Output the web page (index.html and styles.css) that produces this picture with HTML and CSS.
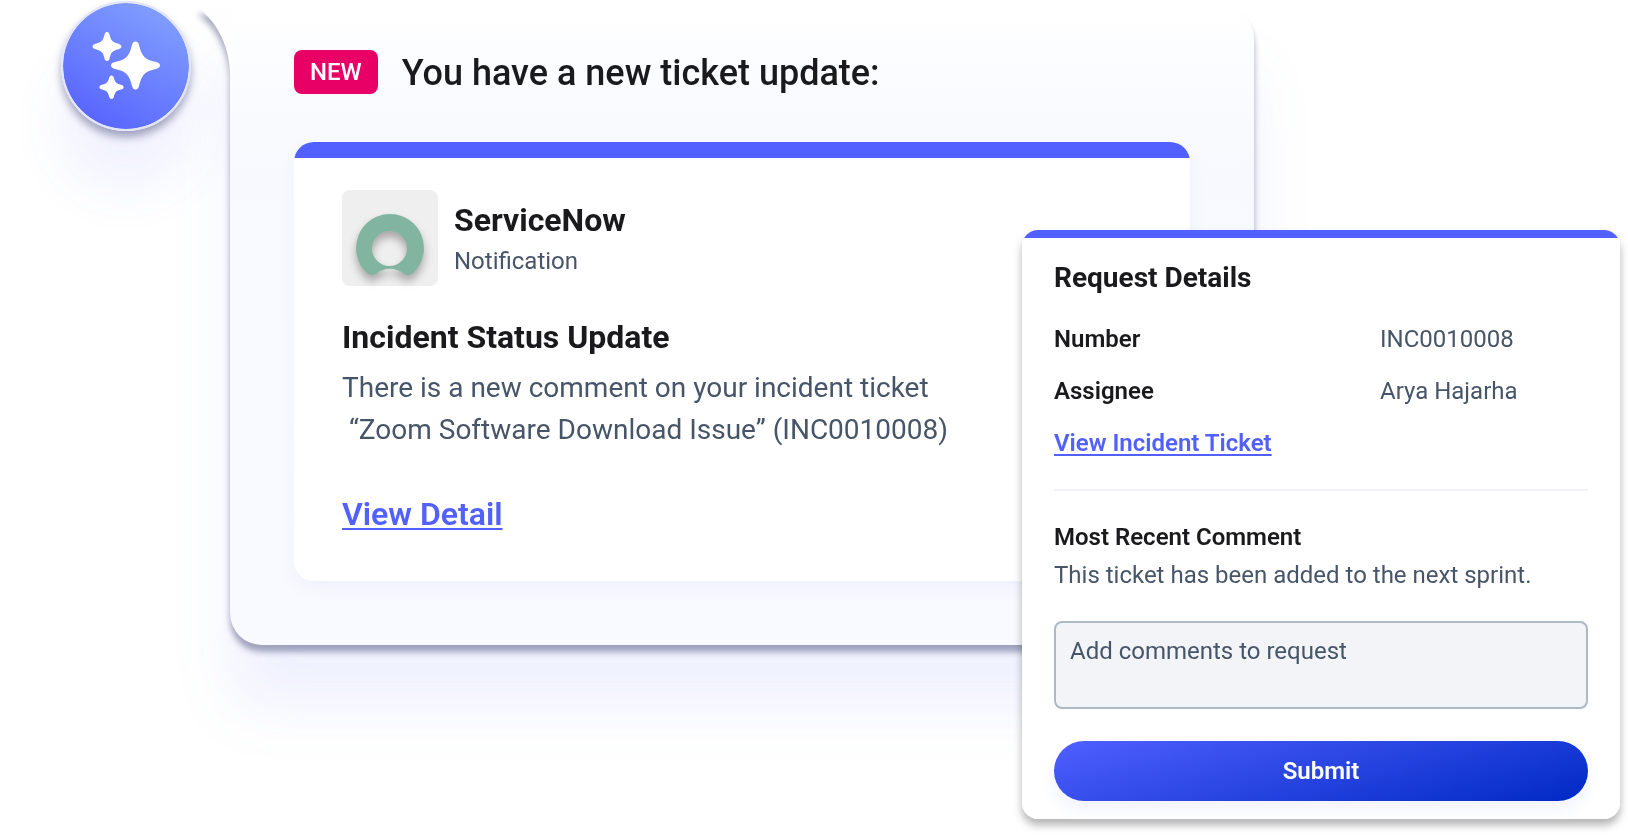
FILE: index.html
```html
<!DOCTYPE html>
<html lang="en">
<head>
  <meta charset="UTF-8">
  <meta name="viewport" content="width=device-width, initial-scale=1">
  <title>Ticket update</title>
  <link rel="stylesheet" href="styles.css">
</head>
<body>
  <main class="stage">
    <div class="avatar">
      <svg viewBox="0 0 126 126" aria-hidden="true">
        <path d="M72.500 38.500c2.200 0 3 1.700 3.500 3.600 2.700 11 5.500 14.700 17 17 2 .4 4 1.400 4 3.400s-2 3-4 3.400c-11.500 2.300-14.300 6-17 17-.5 1.900-1.300 3.600-3.500 3.600s-3-1.700-3.500-3.600c-2.700-11-5.500-14.700-17-17-2-.4-4-1.400-4-3.400s2-3 4-3.400c11.500-2.300 14.300-6 17-17 .5-1.900 1.300-3.600 3.500-3.600z"/>
        <path d="M44 29c1.500 0 2.200 1.200 2.500 2.500 1.300 6 3 7.800 9 9.300 1.500.4 3 1.200 3 2.700s-1.500 2.300-3 2.700c-6 1.500-7.700 3.300-9 9.300-.3 1.300-1 2.500-2.500 2.500s-2.200-1.200-2.500-2.500c-1.300-6-3-7.800-9-9.300-1.500-.4-3-1.200-3-2.700s1.500-2.300 3-2.700c6-1.500 7.700-3.300 9-9.300.3-1.300 1-2.500 2.500-2.500z"/>
        <path d="M48.500 72.500c1.400 0 2 1 2.400 2.300 1.100 4.500 2.300 5.700 7 7 1.500.4 2.700 1 2.700 2.400s-1.200 2-2.700 2.400c-4.700 1.300-5.900 2.500-7 7-.4 1.300-1 2.400-2.400 2.400s-2-1.100-2.400-2.400c-1.100-4.500-2.300-5.700-7-7-1.500-.4-2.700-1-2.700-2.400s1.200-2 2.700-2.400c4.700-1.300 5.900-2.500 7-7 .4-1.300 1-2.300 2.400-2.300z"/>
      </svg>
    </div>

    <section class="bubble">
      <svg class="tail" viewBox="0 0 34 68" aria-hidden="true">
        <path d="M0 0C22 16 33 42 33 68H34V0z"/>
      </svg>
      <header class="bubble-head">
        <span class="badge">NEW</span>
        <h1>You have a new ticket update:</h1>
      </header>

      <article class="card">
        <div class="app">
          <div class="app-logo">
            <svg viewBox="0 0 96 96" aria-hidden="true">
              <path fill-rule="evenodd" d="M48 24a34 34 0 0 0-23.500 58.500c2.500 2.600 6.500 3.400 10 1a22 22 0 0 1 27 0c3.500 2.400 7.500 1.600 10-1A34 34 0 0 0 48 24zm-.5 17a17.500 17.500 0 1 1 0 35 17.500 17.500 0 0 1 0-35z"/>
            </svg>
          </div>
          <div>
            <h2>ServiceNow</h2>
            <p class="app-kind">Notification</p>
          </div>
        </div>
        <h2 class="card-title">Incident Status Update</h2>
        <p class="card-text">There is a new comment on your incident ticket<br>&nbsp;“Zoom Software Download Issue” (INC0010008)</p>
        <a class="link link-large" href="#">View Detail</a>
      </article>
    </section>

    <form class="details">
      <h3>Request Details</h3>
      <dl class="fields">
        <dt>Number</dt>
        <dd>INC0010008</dd>
        <dt>Assignee</dt>
        <dd>Arya Hajarha</dd>
      </dl>
      <a class="link" href="#">View Incident Ticket</a>
      <hr>
      <label class="comment-label" for="comment">Most Recent Comment</label>
      <p class="comment-text">This ticket has been added to the next sprint.</p>
      <textarea id="comment" placeholder="Add comments to request"></textarea>
      <button type="button">Submit</button>
    </form>
  </main>
</body>
</html>
```
FILE: styles.css
```css
* {
  box-sizing: border-box;
}
body {
  margin: 0;
  background: #fff;
  color: #1a1a1c;
  font-family: Roboto, Arial, sans-serif;
  font-size: 24px;
  line-height: 36px;
}
h1, h2, h3, p, dl, dd {
  margin: 0;
}
h2 {
  font-size: 32px;
  font-weight: 700;
  line-height: 46px;
}
.stage {
  position: relative;
  display: flex;
  align-items: flex-start;
  gap: 39px;
  min-height: 836px;
  padding: 1px 374px 0 61px;
  overflow: hidden;
}

/* assistant avatar */
.avatar {
  flex: none;
  width: 130px;
  height: 130px;
  border: 2px solid #e2e4fc;
  border-radius: 50%;
  background: linear-gradient(210deg, #7f9bff 15%, #5764ff 90%);
  background-clip: padding-box;
  box-shadow: 0 6px 9px rgba(0, 5, 61, 0.34), 0 56px 56px rgba(80, 96, 240, 0.09);
}
.avatar svg {
  display: block;
  fill: #fff;
}

/* speech bubble */
.bubble {
  position: relative;
  flex: 1;
  margin-top: 6px;
  padding: 43px 64px 64px;
  border-radius: 0 32px 32px 32px;
  background: linear-gradient(#fff, #fbfcff 60px, #f8f9fe 160px, #f9faff);
  filter: drop-shadow(0 7px 3px rgba(0, 5, 61, 0.34)) drop-shadow(0 60px 28px rgba(80, 96, 240, 0.09));
}
.tail {
  position: absolute;
  top: 0;
  left: -33px;
  width: 34px;
  height: 68px;
  fill: #fefeff;
}
.bubble-head {
  display: flex;
  align-items: flex-start;
  gap: 24px;
  margin-bottom: 46px;
}
.bubble-head h1 {
  font-size: 36px;
  font-weight: 500;
  line-height: 46px;
}
.badge {
  padding: 4px 16px;
  border-radius: 8px;
  background: #e80066;
  color: #fff;
  font-weight: 500;
}
.card {
  padding: 48px 48px 43px;
  border-radius: 20px;
  background: linear-gradient(#5160ff 16px, #fff 16px);
  box-shadow: 0 8px 16px rgba(80, 96, 240, 0.06);
}
.app {
  display: flex;
  align-items: center;
  gap: 16px;
  margin-bottom: 28px;
}
.app-logo {
  width: 96px;
  height: 96px;
  border-radius: 8px;
  background: #efefef;
}
.app-logo svg {
  display: block;
  fill: #81b5a1;
  filter: drop-shadow(0 6px 4px rgba(0, 0, 0, 0.3));
}
.app-kind, .card-text, .fields dd, .comment-text {
  color: #475569;
}
.card-title {
  margin-bottom: 7px;
}
.card-text {
  margin-bottom: 39px;
  font-size: 28px;
  line-height: 42px;
}
.link {
  color: #5160ff;
  font-weight: 600;
  text-decoration-thickness: 2px;
  text-underline-offset: 3px;
}
.link-large {
  font-size: 32px;
  line-height: 48px;
}

/* request panel, floats over the bubble */
.details {
  position: absolute;
  top: 230px;
  right: 8px;
  width: 598px;
  padding: 25px 32px 18px;
  border-radius: 16px;
  background: linear-gradient(#5160ff 8px, #fff 8px);
  box-shadow: 0 6px 8px rgba(0, 0, 0, 0.3);
}
.details h3 {
  margin-bottom: 20px;
  font-size: 28px;
  font-weight: 700;
  line-height: 46px;
}
.fields {
  display: grid;
  grid-template-columns: 326px 1fr;
  row-gap: 16px;
  margin-bottom: 16px;
}
.fields dt, .comment-label {
  font-weight: 600;
}
.details hr {
  height: 2px;
  margin: 28px 0;
  border: 0;
  background: #f1f2f9;
}
.comment-label {
  display: block;
  margin-bottom: 2px;
}
.comment-text {
  margin-bottom: 28px;
}
.details textarea {
  display: block;
  width: 100%;
  height: 88px;
  margin-bottom: 32px;
  padding: 10px 14px;
  border: 2px solid #aeb9c8;
  border-radius: 8px;
  background: #f2f4f8;
  font: inherit;
  resize: none;
}
.details textarea::placeholder {
  color: #475569;
}
.details button {
  display: block;
  width: 100%;
  height: 60px;
  border: 0;
  border-radius: 30px;
  background: linear-gradient(165deg, #5060ff, #0029c4);
  box-shadow: 0 8px 16px rgba(80, 96, 240, 0.08);
  color: #fff;
  font: inherit;
  font-weight: 600;
  cursor: pointer;
}
```
